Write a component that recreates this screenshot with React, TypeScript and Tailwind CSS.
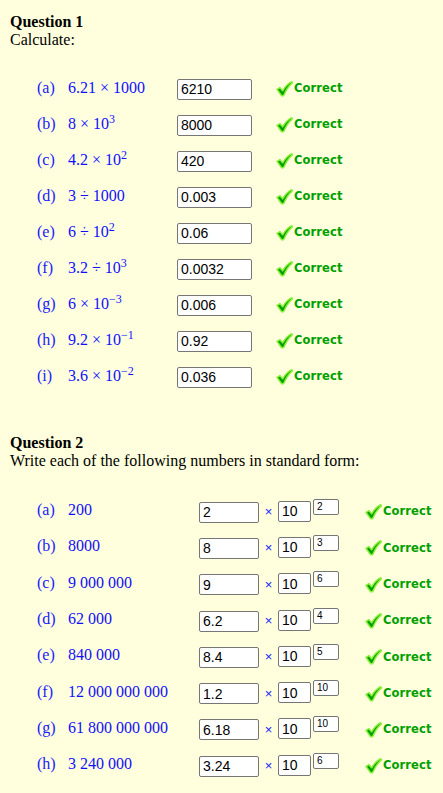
import React from "react";

const serif = { fontFamily: '"Liberation Serif", "Times New Roman", serif' };

function Check() {
  return (
    <svg width="17" height="16" viewBox="0 0 17 16" className="shrink-0">
      <path
        d="M1 8.4 L4 6.6 L6.6 9.8 C9 5.8 11.5 2.8 15.6 0.6 L16.4 1.8 C12.5 5 9.8 9.5 7.6 14.8 L5.6 14.8 Z"
        fill="#00a000"
        stroke="#8cf03c"
        strokeWidth="1.5"
        strokeLinejoin="round"
      />
    </svg>
  );
}

function Correct() {
  return (
    <div className="flex items-center">
      <Check />
      <span
        className="ml-[1px] text-[11.5px] font-bold text-[#009f00] leading-none tracking-[0.1px]"
        style={{ fontFamily: '"DejaVu Sans", Verdana, sans-serif' }}
      >
        Correct
      </span>
    </div>
  );
}

function Box({ w, children }: { w: string; children: React.ReactNode }) {
  return (
    <div
      className={`${w} h-[21px] bg-white border border-[#767676] rounded-[2px] pl-[3px] flex items-center text-[14px] text-black leading-none`}
      style={{ fontFamily: '"Liberation Sans", Arial, sans-serif' }}
    >
      {children}
    </div>
  );
}

const q1: { l: string; e: React.ReactNode; v: string }[] = [
  { l: "(a)", e: <>6.21 × 1000</>, v: "6210" },
  { l: "(b)", e: <>8 × 10<sup>3</sup></>, v: "8000" },
  { l: "(c)", e: <>4.2 × 10<sup>2</sup></>, v: "420" },
  { l: "(d)", e: <>3 ÷ 1000</>, v: "0.003" },
  { l: "(e)", e: <>6 ÷ 10<sup>2</sup></>, v: "0.06" },
  { l: "(f)", e: <>3.2 ÷ 10<sup>3</sup></>, v: "0.0032" },
  { l: "(g)", e: <>6 × 10<sup>−3</sup></>, v: "0.006" },
  { l: "(h)", e: <>9.2 × 10<sup>−1</sup></>, v: "0.92" },
  { l: "(i)", e: <>3.6 × 10<sup>−2</sup></>, v: "0.036" },
];

const q2 = [
  { l: "(a)", n: "200", a: "2", p: "2" },
  { l: "(b)", n: "8000", a: "8", p: "3" },
  { l: "(c)", n: "9 000 000", a: "9", p: "6" },
  { l: "(d)", n: "62 000", a: "6.2", p: "4" },
  { l: "(e)", n: "840 000", a: "8.4", p: "5" },
  { l: "(f)", n: "12 000 000 000", a: "1.2", p: "10" },
  { l: "(g)", n: "61 800 000 000", a: "6.18", p: "10" },
  { l: "(h)", n: "3 240 000", a: "3.24", p: "6" },
];

export default function App() {
  return (
    <div
      className="w-[443px] min-h-[793px] bg-[#ffffdd] px-[10px] pt-[13px] text-[16px] leading-[18px] text-black"
      style={serif}
    >
      <div className="font-bold">Question 1</div>
      <div>Calculate:</div>
      <div className="mt-[22px] pl-[27px]">
        {q1.map((r) => (
          <div key={r.l} className="h-[36px] flex items-center">
            <div className="w-[31px] text-[#2020ff] pb-[2px]">{r.l}</div>
            <div className="w-[109px] text-[#1010ff] pb-[2px]">{r.e}</div>
            <Box w="w-[75px]">{r.v}</Box>
            <div className="ml-[24px]">
              <Correct />
            </div>
          </div>
        ))}
      </div>

      <div className="mt-[39px] font-bold">Question 2</div>
      <div>Write each of the following numbers in standard form:</div>
      <div className="mt-[24px] pl-[27px]">
        {q2.map((r) => (
          <div key={r.l} className="h-[36.3px] flex items-center">
            <div className="w-[31px] text-[#2020ff] pb-[4px]">{r.l}</div>
            <div className="w-[131px] text-[#1010ff] pb-[4px]">{r.n}</div>
            <Box w="w-[60px]">{r.a}</Box>
            <div
              className="w-[19px] text-center text-[13px] text-[#2020ff]"
              style={{ fontFamily: '"Liberation Sans", Arial, sans-serif' }}
            >
              ×
            </div>
            <div className="h-[23px] mb-[4px] flex">
              <div className="self-end">
                <Box w="w-[33px]">10</Box>
              </div>
              <div
                className="ml-[2px] self-start w-[26px] h-[16px] bg-white border border-[#767676] rounded-[2px] pl-[3px] pt-[1px] text-[10px] leading-[11px] text-black"
                style={{ fontFamily: '"Liberation Sans", Arial, sans-serif' }}
              >
                {r.p}
              </div>
            </div>
            <div className="ml-[26px]">
              <Correct />
            </div>
          </div>
        ))}
      </div>
    </div>
  );
}
